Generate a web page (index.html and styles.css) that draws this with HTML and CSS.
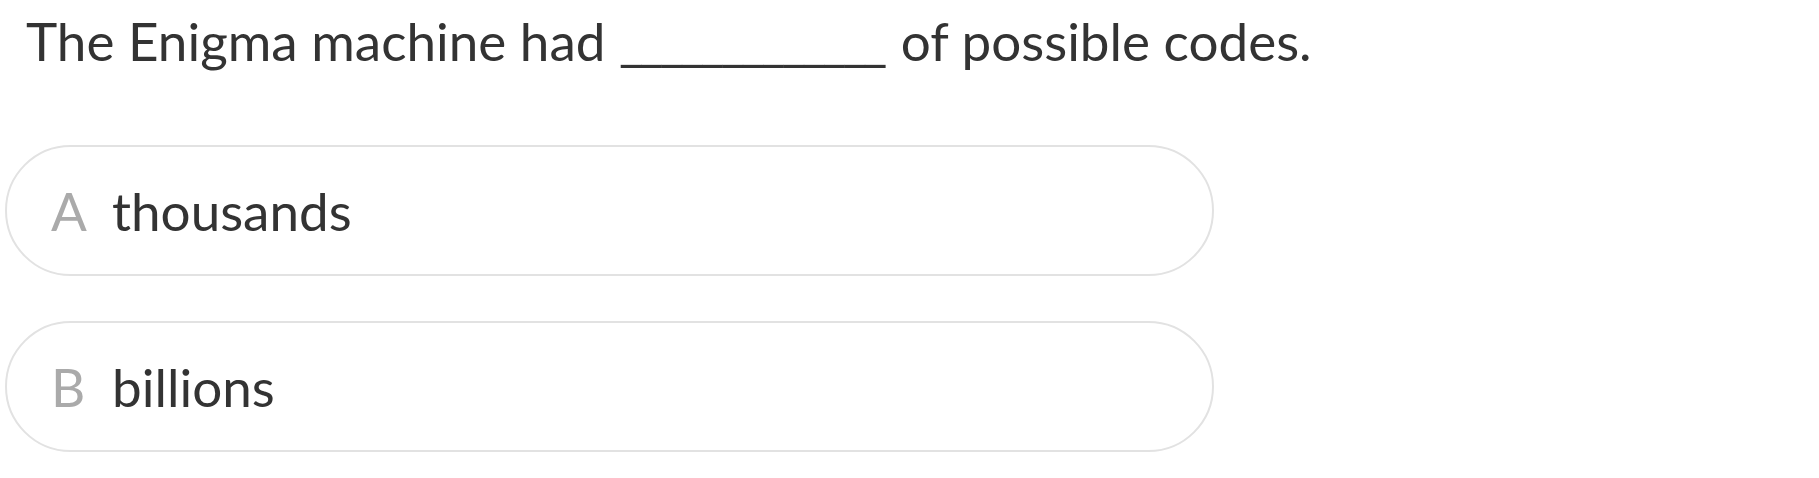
FILE: index.html
```html
<!DOCTYPE html>
<html lang="en">
<head>
<meta charset="utf-8">
<title>Question</title>
<link rel="stylesheet" href="styles.css">
</head>
<body>
<main class="quiz">
  <p class="prompt">The Enigma machine had <span class="blank">_____________</span> of possible codes.</p>
  <ul class="options">
    <li class="option"><span class="letter">A</span><span class="answer">thousands</span></li>
    <li class="option"><span class="letter">B</span><span class="answer">billions</span></li>
  </ul>
</main>
</body>
</html>
```
FILE: styles.css
```css
html, body {
  margin: 0;
  padding: 0;
  background: #ffffff;
}

.quiz {
  font-family: Lato, "Open Sans", sans-serif;
  color: #333333;
  font-size: 53px;
  line-height: 64px;
}

.prompt {
  margin: 9px 0 0 26px;
  white-space: nowrap;
}

.blank {
  letter-spacing: -4px;
  margin-right: 4px;
}

.options {
  list-style: none;
  margin: 72px 0 0 5px;
  padding: 0;
  display: flex;
  flex-direction: column;
  gap: 45px;
  width: 1209px;
}

.option {
  box-sizing: border-box;
  height: 131px;
  border: 2px solid #e2e2e2;
  border-radius: 66px;
  display: flex;
  align-items: center;
  padding-left: 44px;
}

.letter {
  color: #aaaaaa;
  width: 61px;
  flex: none;
}

.answer {
  color: #333333;
}
```
